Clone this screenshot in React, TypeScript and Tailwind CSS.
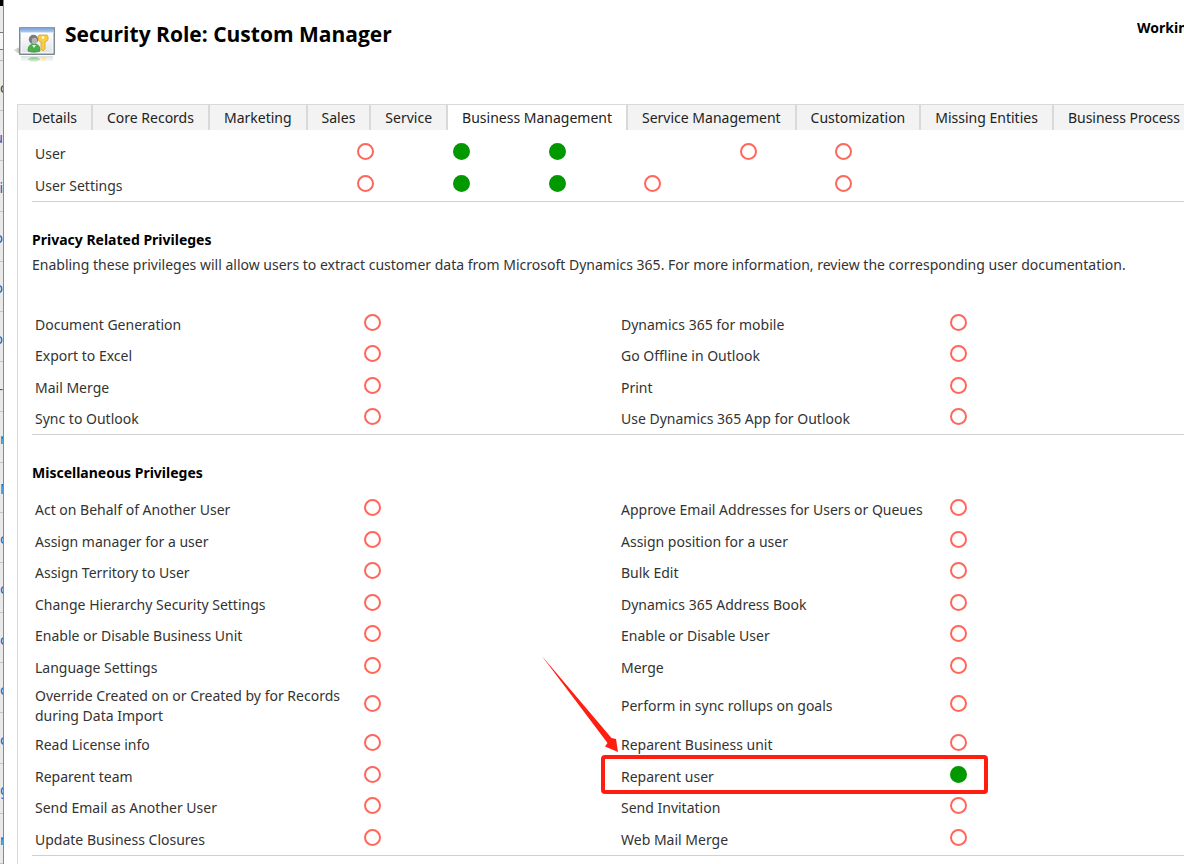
import { Fragment } from 'react';
import clsx from 'clsx';

type Level = 'none' | 'full';

type Privilege = {
  name: string;
  level?: Level;
  highlighted?: boolean;
};

const tabs = [
  'Details',
  'Core Records',
  'Marketing',
  'Sales',
  'Service',
  'Business Management',
  'Service Management',
  'Customization',
  'Missing Entities',
  'Business Process',
];

const activeTab = 'Business Management';

const accessTypes = ['Create', 'Read', 'Write', 'Delete', 'Append', 'Append To'];

const entities: { name: string; levels: (Level | null)[] }[] = [
  { name: 'User', levels: ['none', 'full', 'full', null, 'none', 'none'] },
  { name: 'User Settings', levels: ['none', 'full', 'full', 'none', null, 'none'] },
];

const privacyPrivileges: Privilege[][] = [
  [{ name: 'Document Generation' }, { name: 'Dynamics 365 for mobile' }],
  [{ name: 'Export to Excel' }, { name: 'Go Offline in Outlook' }],
  [{ name: 'Mail Merge' }, { name: 'Print' }],
  [{ name: 'Sync to Outlook' }, { name: 'Use Dynamics 365 App for Outlook' }],
];

const miscPrivileges: Privilege[][] = [
  [{ name: 'Act on Behalf of Another User' }, { name: 'Approve Email Addresses for Users or Queues' }],
  [{ name: 'Assign manager for a user' }, { name: 'Assign position for a user' }],
  [{ name: 'Assign Territory to User' }, { name: 'Bulk Edit' }],
  [{ name: 'Change Hierarchy Security Settings' }, { name: 'Dynamics 365 Address Book' }],
  [{ name: 'Enable or Disable Business Unit' }, { name: 'Enable or Disable User' }],
  [{ name: 'Language Settings' }, { name: 'Merge' }],
  [
    { name: 'Override Created on or Created by for Records during Data Import' },
    { name: 'Perform in sync rollups on goals' },
  ],
  [{ name: 'Read License info' }, { name: 'Reparent Business unit' }],
  [{ name: 'Reparent team' }, { name: 'Reparent user', level: 'full', highlighted: true }],
  [{ name: 'Send Email as Another User' }, { name: 'Send Invitation' }],
  [{ name: 'Update Business Closures' }, { name: 'Web Mail Merge' }],
];

// first letters of the list that is open behind the dialog
const backgroundRows = ['c', 'u', 'ri', 'o', 'o', 'o', '-', 'r', 'M', 'c', 'c', 'c', 'c', 'c', 'g', 'n'];

function BackgroundWindow() {
  return (
    <div
      aria-hidden="true"
      className="flex w-1 shrink-0 flex-col overflow-hidden border-r border-[#8a8a8a] bg-[#e9e9e9]"
    >
      <div className="h-[6px] shrink-0 bg-black" />
      <div className="h-[26px] shrink-0" />
      <div className="h-[18px] shrink-0 border-y border-[#777] bg-[#f4f4f4]" />
      <div className="h-[11px] shrink-0 border-b border-[#bbb]" />
      {backgroundRows.map((letter, i) => (
        <div
          key={i}
          className={clsx(
            'flex flex-1 items-center overflow-hidden border-b border-[#c4c4c4] pt-1 text-[14px]',
            i > 0 && i < 7 && 'justify-end',
            i === 0 ? 'text-[#444]' : 'text-[#1f5fc0]',
          )}
        >
          {letter}
        </div>
      ))}
    </div>
  );
}

function RoleIcon() {
  return (
    <svg className="mt-[2px] -ml-1 shrink-0" width="44" height="42" viewBox="0 0 44 42" aria-hidden="true">
      <defs>
        <linearGradient id="bar" x1="0" y1="0" x2="0" y2="1">
          <stop offset="0" stopColor="#6d98d0" />
          <stop offset="1" stopColor="#b9d2f2" />
        </linearGradient>
        <linearGradient id="pane" x1="0" y1="0" x2="0" y2="1">
          <stop offset="0" stopColor="#ffffff" />
          <stop offset="1" stopColor="#dfe3e8" />
        </linearGradient>
        <linearGradient id="shadow" x1="1" y1="0" x2="0" y2="0">
          <stop offset="0" stopColor="#b4b4b4" />
          <stop offset="1" stopColor="#f4f4f4" />
        </linearGradient>
        <linearGradient id="fade" x1="0" y1="0" x2="0" y2="1">
          <stop offset="0" stopColor="#ffffff" stopOpacity="0.1" />
          <stop offset="1" stopColor="#ffffff" stopOpacity="0.9" />
        </linearGradient>
      </defs>
      <path d="M0 30L7 27V34Z" fill="url(#shadow)" />
      <rect x="6" y="7" width="36" height="28" rx="1" fill="#7b898c" />
      <rect x="7" y="7" width="34" height="6" fill="url(#bar)" />
      <rect x="8" y="13" width="32" height="20" fill="url(#pane)" stroke="#ffffff" />
      <path d="M15 31c0-5 2-7 6-7s6 2 6 7c-3 1.500-9 1.500-12 0z" fill="#4fae4c" stroke="#348a38" strokeWidth="0.700" />
      <path d="M19 25l2 3 2-3z" fill="#e8f5e6" />
      <circle cx="20.500" cy="19.500" r="4.700" fill="#777c80" />
      <ellipse cx="21.500" cy="21" rx="2.700" ry="3.200" fill="#b4b4b4" />
      <path
        d="M26 15h8c1.500 1 1.500 5 0 6l-2 1v7l-2 2-2-2v-7l-2-1c-1-1-1-5 0-6z"
        fill="#f8ce45"
        stroke="#d9a31f"
        strokeWidth="0.800"
      />
      <circle cx="30" cy="17.500" r="1.200" fill="#ffffff" />
      <path d="M8 36h32v5H8z" fill="#d5d9dc" />
      <path d="M15 39c1-2.500 11-2.500 12 0-1 2-3 3-6 3s-5-1-6-3z" fill="#3da63c" />
      <path d="M28 37h5v4h-4z" fill="#f5cc48" />
      <rect x="6" y="35" width="36" height="7" fill="url(#fade)" />
    </svg>
  );
}

function LevelButton({ level, label }: { level: Level; label: string }) {
  return (
    <button
      type="button"
      aria-label={label}
      className={clsx(
        'block size-[17px] rounded-full border-2',
        level === 'full' ? 'border-[#009a00] bg-[#009a00]' : 'border-[#ff665c] bg-white',
      )}
    />
  );
}

function Highlight() {
  return (
    <>
      <span className="pointer-events-none absolute -top-[3px] -left-[17px] h-[39px] w-[387px] rounded-sm border-4 border-[#ff1e10]" />
      <svg
        className="pointer-events-none absolute -top-[103px] -left-[77px]"
        width="78"
        height="98"
        viewBox="0 0 78 98"
        aria-hidden="true"
      >
        <path d="M0.500 0.500L70.500 83L75 84L77 97L64 91.500L66.500 88Z" fill="#ff1e10" />
      </svg>
    </>
  );
}

function PrivilegeTable({ title, rows, className }: { title: string; rows: Privilege[][]; className: string }) {
  return (
    <table aria-label={title} className={clsx('w-full table-fixed', className)}>
      <colgroup>
        <col className="w-[332px]" />
        <col />
        <col className="w-[332px]" />
        <col />
      </colgroup>
      <tbody>
        {rows.map((row) => (
          <tr key={row[0].name} className="h-[31px]">
            {row.map(({ name, level = 'none', highlighted }) => (
              <Fragment key={name}>
                <th scope="row" className="relative pt-[5px] pr-4 pl-[3px] text-left font-normal">
                  {name}
                  {highlighted && <Highlight />}
                </th>
                <td>
                  <LevelButton level={level} label={`${name}: ${level}`} />
                </td>
              </Fragment>
            ))}
          </tr>
        ))}
      </tbody>
    </table>
  );
}

export default function App() {
  return (
    <div className="flex min-h-screen overflow-hidden bg-white font-['Noto_Sans','Open_Sans',sans-serif] text-[14px] leading-5 text-[#333]">
      <BackgroundWindow />
      <main className="flex min-w-0 flex-1 flex-col pl-[13px]">
        <header className="flex h-[104px] items-start pt-[18px]">
          <RoleIcon />
          <h1 className="mt-[2px] ml-2 font-['Open_Sans','Noto_Sans',sans-serif] text-[21px] leading-7 font-bold text-black">
            Security Role: Custom Manager
          </h1>
          <p className="ml-auto w-[47px] overflow-hidden font-bold whitespace-nowrap text-black">Working</p>
        </header>

        <div className="flex-1 border-l border-[#d9d9d9]">
          <div role="tablist" className="flex h-[26px] overflow-hidden border-t border-[#d9d9d9] bg-[#f3f3f3]">
            {tabs.map((tab) => (
              <button
                key={tab}
                type="button"
                role="tab"
                aria-selected={tab === activeTab}
                className={clsx(
                  'shrink-0 border-r-2 border-[#d9d9d9] px-[14px] whitespace-nowrap text-[#222] last:border-r-0',
                  tab === activeTab && 'bg-white',
                )}
              >
                {tab}
              </button>
            ))}
          </div>

          <div className="overflow-hidden pb-2 pl-[14px]">
            <section className="border-b border-[#d0d0d0] pt-[6px] pb-[2px]">
              <table aria-label="Entity privileges" className="h-[63px] w-full table-fixed">
                <colgroup>
                  <col className="w-[286px]" />
                  {accessTypes.map((type) => (
                    <col key={type} className="w-[8.3%]" />
                  ))}
                  <col />
                </colgroup>
                <tbody>
                  {entities.map(({ name, levels }) => (
                    <tr key={name}>
                      <th scope="row" className="pt-[5px] pl-[3px] text-left font-normal">
                        {name}
                      </th>
                      {levels.map((level, i) => (
                        <td key={accessTypes[i]}>
                          {level && (
                            <div className="flex justify-center">
                              <LevelButton level={level} label={`${accessTypes[i]} ${name}: ${level}`} />
                            </div>
                          )}
                        </td>
                      ))}
                      <td />
                    </tr>
                  ))}
                </tbody>
              </table>
            </section>

            <section className="-mr-5 border-b border-[#d0d0d0] pt-7 pb-[2px]">
              <h2 className="font-bold text-black">Privacy Related Privileges</h2>
              <p className="mt-[5px] mb-8 whitespace-nowrap">
                Enabling these privileges will allow users to extract customer data from Microsoft Dynamics 365. For more
                information, review the corresponding user documentation.
              </p>
              <PrivilegeTable title="Privacy Related Privileges" rows={privacyPrivileges} className="h-[125px]" />
            </section>

            <section className="-mr-5 border-b border-[#d0d0d0] pt-7 pb-[2px]">
              <h2 className="mb-[9px] font-bold text-black">Miscellaneous Privileges</h2>
              <PrivilegeTable title="Miscellaneous Privileges" rows={miscPrivileges} className="h-[361px]" />
            </section>
          </div>
        </div>
      </main>
    </div>
  );
}
